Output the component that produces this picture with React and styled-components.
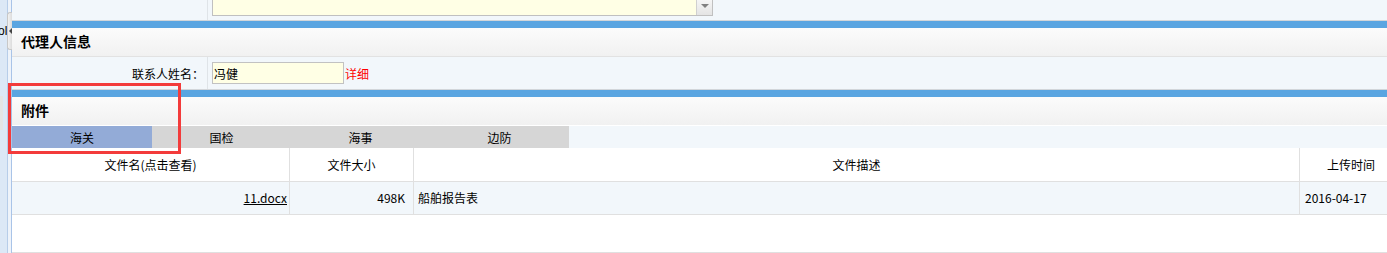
import React from "react";
import styled, { createGlobalStyle } from "styled-components";

const GlobalStyle = createGlobalStyle`
  html, body {
    margin: 0;
    padding: 0;
    background: #ffffff;
  }
  body {
    font-family: "Noto Sans CJK SC", "Liberation Sans", sans-serif;
    font-size: 12px;
    color: #000;
    overflow: hidden;
  }
`;

const App = () => {
  return (
    <>
      <GlobalStyle />
      <Page>
        <Sidebar>
          <SideStrip>
            <SideText>ol</SideText>
            <SideGray />
          </SideStrip>
          <SideGap />
          <CollapseHandle>
            <Arrow />
          </CollapseHandle>
        </Sidebar>

        <Main>
          <FormRow height={20}>
            <LabelCell />
            <ValueCell align="flex-start">
              <SelectBox>
                <SelectButton>
                  <Caret />
                </SelectButton>
              </SelectBox>
            </ValueCell>
          </FormRow>

          <SectionBar edge="#e2e2e2">
            <SectionTitle>代理人信息</SectionTitle>
          </SectionBar>

          <FormRow height={32}>
            <LabelCell>联系人姓名：</LabelCell>
            <ValueCell align="center">
              <TextInput defaultValue="冯健" />
              <DetailLink>详细</DetailLink>
            </ValueCell>
          </FormRow>

          <SectionBar edge="#ffffff">
            <SectionTitle>附件</SectionTitle>
          </SectionBar>

          <TabStrip>
            <Tab active>海关</Tab>
            <Tab>国检</Tab>
            <Tab>海事</Tab>
            <Tab>边防</Tab>
          </TabStrip>

          <FileTable>
            <HeadRow>
              <Cell align="center">文件名(点击查看)</Cell>
              <Cell align="center">文件大小</Cell>
              <Cell align="center">文件描述</Cell>
              <Cell align="right" pr={12}>上传时间</Cell>
            </HeadRow>
            <DataRow>
              <Cell align="right" pr={2}>
                <FileLink href="#">11.docx</FileLink>
              </Cell>
              <Cell align="right" pr={8}>498K</Cell>
              <Cell align="left" pl={4}>船舶报告表</Cell>
              <Cell align="left" pl={5}>2016-04-17</Cell>
            </DataRow>
            <EmptyRow />
          </FileTable>

          <Highlight />
        </Main>
      </Page>
    </>
  );
};

export default App;

const Page = styled.div`
  display: flex;
  width: 1387px;
  height: 253px;
  overflow: hidden;
`;

const Sidebar = styled.div`
  position: relative;
  display: flex;
  width: 12px;
  flex-shrink: 0;
  border-right: 1px solid #a9c4e8;
  box-sizing: border-box;
`;

const SideStrip = styled.div`
  position: relative;
  width: 7px;
  background: #dce8f6;
  border-right: 1px solid #b7cde9;
  overflow: hidden;
`;

const SideText = styled.span`
  position: absolute;
  top: 24px;
  left: -2px;
  font-family: "Liberation Sans", sans-serif;
  font-size: 12px;
  color: #000;
`;

const SideGray = styled.div`
  position: absolute;
  top: 96px;
  left: 0;
  width: 3px;
  height: 34px;
  background: #e4e4e4;
`;

const SideGap = styled.div`
  flex: 1;
  background: #eef3fa;
`;

const CollapseHandle = styled.div`
  position: absolute;
  top: 12px;
  left: 7px;
  width: 4px;
  height: 36px;
  background: linear-gradient(to right, #f2f2f2, #dcdcdc);
  border: 1px solid #c8c8c8;
  border-right: none;
  border-radius: 3px 0 0 3px;
  display: flex;
  align-items: center;
  justify-content: center;
`;

const Arrow = styled.div`
  width: 0;
  height: 0;
  border-top: 3px solid transparent;
  border-bottom: 3px solid transparent;
  border-right: 3px solid #444;
`;

const Main = styled.div`
  position: relative;
  flex: 1;
  display: flex;
  flex-direction: column;
  min-width: 0;
`;

const FormRow = styled.div`
  display: flex;
  height: ${(p) => p.height}px;
  background: #f2f7fb;
  flex-shrink: 0;
`;

const LabelCell = styled.div`
  width: 196px;
  flex-shrink: 0;
  display: flex;
  align-items: center;
  justify-content: flex-end;
  padding-right: 3px;
  box-sizing: border-box;
  border-right: 1px solid #dfe4e8;
  font-size: 12px;
  color: #000;
`;

const ValueCell = styled.div`
  flex: 1;
  display: flex;
  align-items: ${(p) => p.align};
  padding-left: 4px;
`;

const SelectBox = styled.div`
  position: relative;
  width: 499px;
  height: 15px;
  background: #ffffe5;
  border: 1px solid #c0c0c0;
  border-top: none;
  display: flex;
  justify-content: flex-end;
`;

const SelectButton = styled.div`
  width: 16px;
  height: 15px;
  background: linear-gradient(to bottom, #f5f5f5, #e4e4e4);
  border-left: 1px solid #d0d0d0;
  display: flex;
  align-items: flex-start;
  justify-content: center;
  padding-top: 4px;
  box-sizing: border-box;
`;

const Caret = styled.div`
  width: 0;
  height: 0;
  border-left: 4px solid transparent;
  border-right: 4px solid transparent;
  border-top: 4px solid #808080;
`;

const SectionBar = styled.div`
  flex-shrink: 0;
  border-top: 1px solid #d2d6da;
  border-bottom: 1px solid ${(p) => p.edge};
  box-shadow: inset 0 7px 0 #5aa5e1;
  padding-top: 7px;
  background: linear-gradient(to bottom, #fefefe, #f1f1f1);
  background-clip: content-box;
`;

const SectionTitle = styled.div`
  height: 28px;
  box-sizing: border-box;
  display: flex;
  align-items: center;
  padding-left: 9px;
  padding-bottom: 3px;
  font-size: 14px;
  font-weight: bold;
  color: #000;
`;

const TabStrip = styled.div`
  display: flex;
  height: 22px;
  flex-shrink: 0;
  background: #f2f7fb;
`;

const Tab = styled.div`
  width: ${(p) => (p.active ? 140 : 139)}px;
  display: flex;
  align-items: center;
  justify-content: center;
  font-size: 12px;
  color: #000;
  background: ${(p) => (p.active ? "#93abd7" : "#d6d6d6")};
`;

const FileTable = styled.div`
  display: flex;
  flex-direction: column;
  background: #ffffff;
`;

const Row = styled.div`
  display: grid;
  grid-template-columns: 278px 124px 886px 1fr;
  border-bottom: 1px solid #e0e0e0;
`;

const HeadRow = styled(Row)`
  height: 33px;
  background: #ffffff;
`;

const DataRow = styled(Row)`
  height: 32px;
  background: #f2f7fb;

  & > div {
    padding-bottom: 2px;
  }
`;

const EmptyRow = styled.div`
  height: 37px;
  border-bottom: 1px solid #e0e0e0;
`;

const Cell = styled.div`
  display: flex;
  align-items: center;
  justify-content: ${(p) =>
    p.align === "right" ? "flex-end" : p.align === "left" ? "flex-start" : "center"};
  padding-right: ${(p) => p.pr || 0}px;
  padding-left: ${(p) => p.pl || 0}px;
  box-sizing: border-box;
  border-right: 1px solid #e0e0e0;
  font-size: 12px;
  color: #000;
  white-space: nowrap;
  overflow: hidden;

  &:last-child {
    border-right: none;
  }
`;

const FileLink = styled.a`
  color: #000;
  text-decoration: underline;
`;

const TextInput = styled.input`
  width: 132px;
  height: 22px;
  box-sizing: border-box;
  border: 1px solid #c2c2c2;
  background: #ffffe5;
  padding: 0 1px;
  font-family: "Noto Sans CJK SC", "Liberation Sans", sans-serif;
  font-size: 12px;
  color: #000;
  outline: none;
`;

const DetailLink = styled.span`
  color: #ff0000;
  font-size: 12px;
  margin-left: 1px;
`;

const Highlight = styled.div`
  position: absolute;
  top: 83px;
  left: -4px;
  width: 173px;
  height: 71px;
  box-sizing: border-box;
  border: 3px solid #f33b3b;
  pointer-events: none;
`;
